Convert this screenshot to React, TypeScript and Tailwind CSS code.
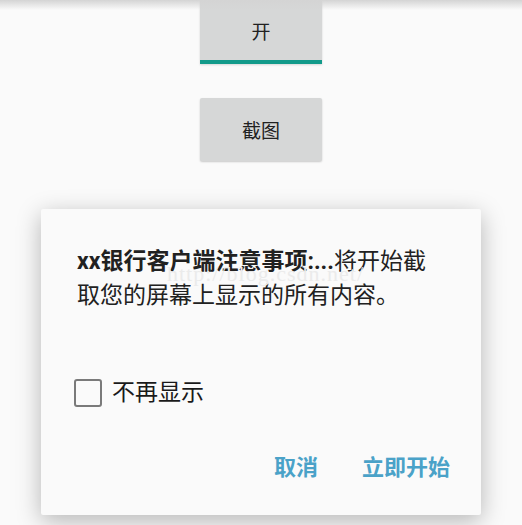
import React, { useState } from "react";

const font = {
    fontFamily: '"Roboto", "Noto Sans CJK SC", sans-serif',
};

const App: React.FC = () => {
    const [checked, setChecked] = useState(false);

    return (
        <div
            className="relative w-[522px] h-[525px] overflow-hidden bg-[#fafafa] text-[#212121]"
            style={font}
        >
            {/* toolbar shadow from above */}
            <div className="absolute inset-x-0 top-0 h-[10px] bg-gradient-to-b from-[#d4d4d4] to-transparent z-10" />

            <div className="flex flex-col items-center">
                <button className="w-[122px] h-[64px] bg-[#d6d7d7] border-b-[4px] border-[#129a8a] text-[19px] pt-[6px] shadow-[0_1px_2px_rgba(0,0,0,0.15)]">
                    开
                </button>
                <button className="mt-[34px] w-[122px] h-[63px] bg-[#d6d7d7] rounded-[2px] text-[19px] pt-[5px] shadow-[0_1px_2px_rgba(0,0,0,0.2)]">
                    截图
                </button>
            </div>

            <div className="relative mt-[48px] ml-[41px] w-[440px] h-[306px] bg-[#fafafa] rounded-[2px] shadow-[0_6px_24px_rgba(0,0,0,0.28)] flex flex-col px-[36px] pt-[36px]">
                <p className="text-[23px] leading-[34px] w-[362px]">
                    <span className="font-bold">xx银行客户端注意事项:...</span>
                    将开始截取您的屏幕上显示的所有内容。
                </p>
                <span
                    className="absolute left-[126px] top-[48px] text-[22px] text-[#ebebeb] tracking-[1px] pointer-events-none"
                    style={{ fontFamily: '"Liberation Serif", serif' }}
                >
                    http://blog.csdn.net/
                </span>

                <label className="mt-[66px] flex items-center gap-[10px] cursor-pointer">
                    <span
                        onClick={() => setChecked(!checked)}
                        className={`w-[28px] h-[28px] -ml-[3px] rounded-[3px] border-2 ${
                            checked ? "bg-[#129a8a] border-[#129a8a]" : "border-[#7a7a7a]"
                        }`}
                    />
                    <span className="text-[23px] leading-[28px] text-[#1a1a1a]">不再显示</span>
                </label>

                <div className="mt-[44px] flex justify-end gap-[44px] text-[22px] font-bold text-[#4aa2c8]">
                    <button>取消</button>
                    <button className="-mr-[5px]">立即开始</button>
                </div>
            </div>
        </div>
    );
};

export default App;
